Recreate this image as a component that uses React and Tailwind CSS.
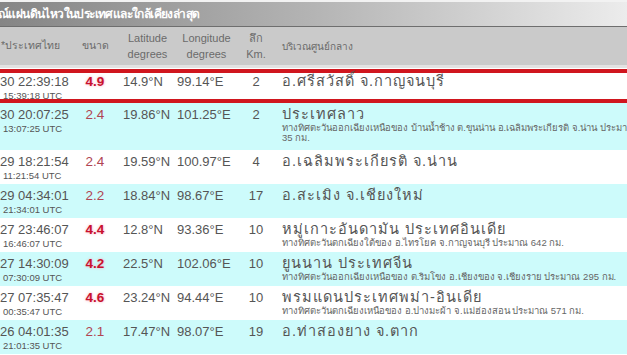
import React from 'react';

const rows = [
    { date: '30 22:39:18', utc: '15:39:18 UTC', mag: '4.9', lat: '14.9°N', lon: '99.14°E', depth: '2', place: 'อ.ศรีสวัสดิ์ จ.กาญจนบุรี', sub: [], latest: true },
    { date: '30 20:07:25', utc: '13:07:25 UTC', mag: '2.4', lat: '19.86°N', lon: '101.25°E', depth: '2', place: 'ประเทศลาว', sub: ['ทางทิศตะวันออกเฉียงเหนือของ บ้านน้ำช้าง ต.ขุนน่าน อ.เฉลิมพระเกียรติ จ.น่าน ประมาณ', '35 กม.'] },
    { date: '29 18:21:54', utc: '11:21:54 UTC', mag: '2.4', lat: '19.59°N', lon: '100.97°E', depth: '4', place: 'อ.เฉลิมพระเกียรติ จ.น่าน', sub: [] },
    { date: '29 04:34:01', utc: '21:34:01 UTC', mag: '2.2', lat: '18.84°N', lon: '98.67°E', depth: '17', place: 'อ.สะเมิง จ.เชียงใหม่', sub: [] },
    { date: '27 23:46:07', utc: '16:46:07 UTC', mag: '4.4', lat: '12.8°N', lon: '93.36°E', depth: '10', place: 'หมู่เกาะอันดามัน ประเทศอินเดีย', sub: ['ทางทิศตะวันตกเฉียงใต้ของ อ.ไทรโยค จ.กาญจนบุรี ประมาณ 642 กม.'] },
    { date: '27 14:30:09', utc: '07:30:09 UTC', mag: '4.2', lat: '22.5°N', lon: '102.06°E', depth: '10', place: 'ยูนนาน ประเทศจีน', sub: ['ทางทิศตะวันออกเฉียงเหนือของ ต.ริมโขง อ.เชียงของ จ.เชียงราย ประมาณ 295 กม.'] },
    { date: '27 07:35:47', utc: '00:35:47 UTC', mag: '4.6', lat: '23.24°N', lon: '94.44°E', depth: '10', place: 'พรมแดนประเทศพม่า-อินเดีย', sub: ['ทางทิศตะวันตกเฉียงเหนือของ อ.ปางมะผ้า จ.แม่ฮ่องสอน ประมาณ 571 กม.'] },
    { date: '26 04:01:35', utc: '21:01:35 UTC', mag: '2.1', lat: '17.47°N', lon: '98.07°E', depth: '19', place: 'อ.ท่าสองยาง จ.ตาก', sub: [] },
];

const QuakeRow = ({ q, cyan }) => {
    const strong = parseFloat(q.mag) >= 4;
    const bg = q.latest ? 'bg-white border-y-4 border-[#d0161e]' : cyan ? 'bg-[#cdfbfb]' : 'bg-white';
    return (
        <div className={`flex items-start whitespace-nowrap ${bg} ${q.latest ? 'h-[34px] pt-[2px]' : q.sub.length > 1 ? 'h-[47px] pt-[5px]' : 'h-[34px] pt-[5px]'}`}>
            <div className="w-[78px] shrink-0 leading-none">
                <div className="text-[13px] text-[#555]">{q.date}</div>
                <div className="text-[9.5px] text-[#555] mt-[3px] pl-[3px]">{q.utc}</div>
            </div>
            <div className={`w-[34px] shrink-0 text-center text-[13.5px] leading-none ${strong ? 'font-bold text-[#c8102e] [text-shadow:0_0_3px_#f7a8b8]' : 'text-[#b04552]'}`}>
                {q.mag}
            </div>
            <div className="w-[63px] shrink-0 pl-[11px] text-[13px] leading-none text-[#555]">{q.lat}</div>
            <div className="w-[63px] shrink-0 pl-[2px] text-[13px] leading-none text-[#555]">{q.lon}</div>
            <div className="w-[36px] shrink-0 text-center text-[13px] leading-none text-[#555]">{q.depth}</div>
            <div className="pl-[8px] leading-none">
                <div className="text-[14.5px] tracking-[1px] text-[#555] -mt-[1px]">{q.place}</div>
                {q.sub.map((s, i) => (
                    <div key={i} className="text-[9.5px] text-[#666] mt-[1px]">{s}</div>
                ))}
            </div>
        </div>
    );
};

const App = () => {
    return (
        <div className="w-[627px] h-[355px] overflow-hidden bg-white font-['Liberation_Sans','Noto_Sans',sans-serif]">
            {/* title bar */}
            <div className="h-[27px] border-t-2 border-[#f2f2f2] bg-gradient-to-r from-[#858585] via-[#b4b4b4] to-[#ececec] border-b border-b-[#6e6e6e] flex items-center">
                <span className="text-white text-[12px] font-bold tracking-[-0.6px] -ml-[2px] whitespace-nowrap">ณ์แผ่นดินไหวในประเทศและใกล้เคียงล่าสุด</span>
            </div>
            {/* header */}
            <div className="h-[41px] bg-[#cacaca] border-b-[3px] border-[#e2e2e2] flex items-center text-[11px] text-[#6a6a6a] leading-[1.5] whitespace-nowrap">
                <div className="w-[78px] shrink-0 pl-[1px] text-[10.5px]">*ประเทศไทย</div>
                <div className="w-[34px] shrink-0 text-center text-[10.5px]">ขนาด</div>
                <div className="w-[63px] shrink-0 pl-[8px] text-center">Latitude<br />degrees</div>
                <div className="w-[63px] shrink-0 text-center">Longitude<br />degrees</div>
                <div className="w-[36px] shrink-0 text-center">ลึก<br />Km.</div>
                <div className="pl-[8px] text-[10px]">บริเวณศูนย์กลาง</div>
            </div>
            <div className="h-[1px]" />
            {rows.map((q, i) => (
                <QuakeRow key={i} q={q} cyan={i % 2 === 1} />
            ))}
        </div>
    );
};

export default App;
